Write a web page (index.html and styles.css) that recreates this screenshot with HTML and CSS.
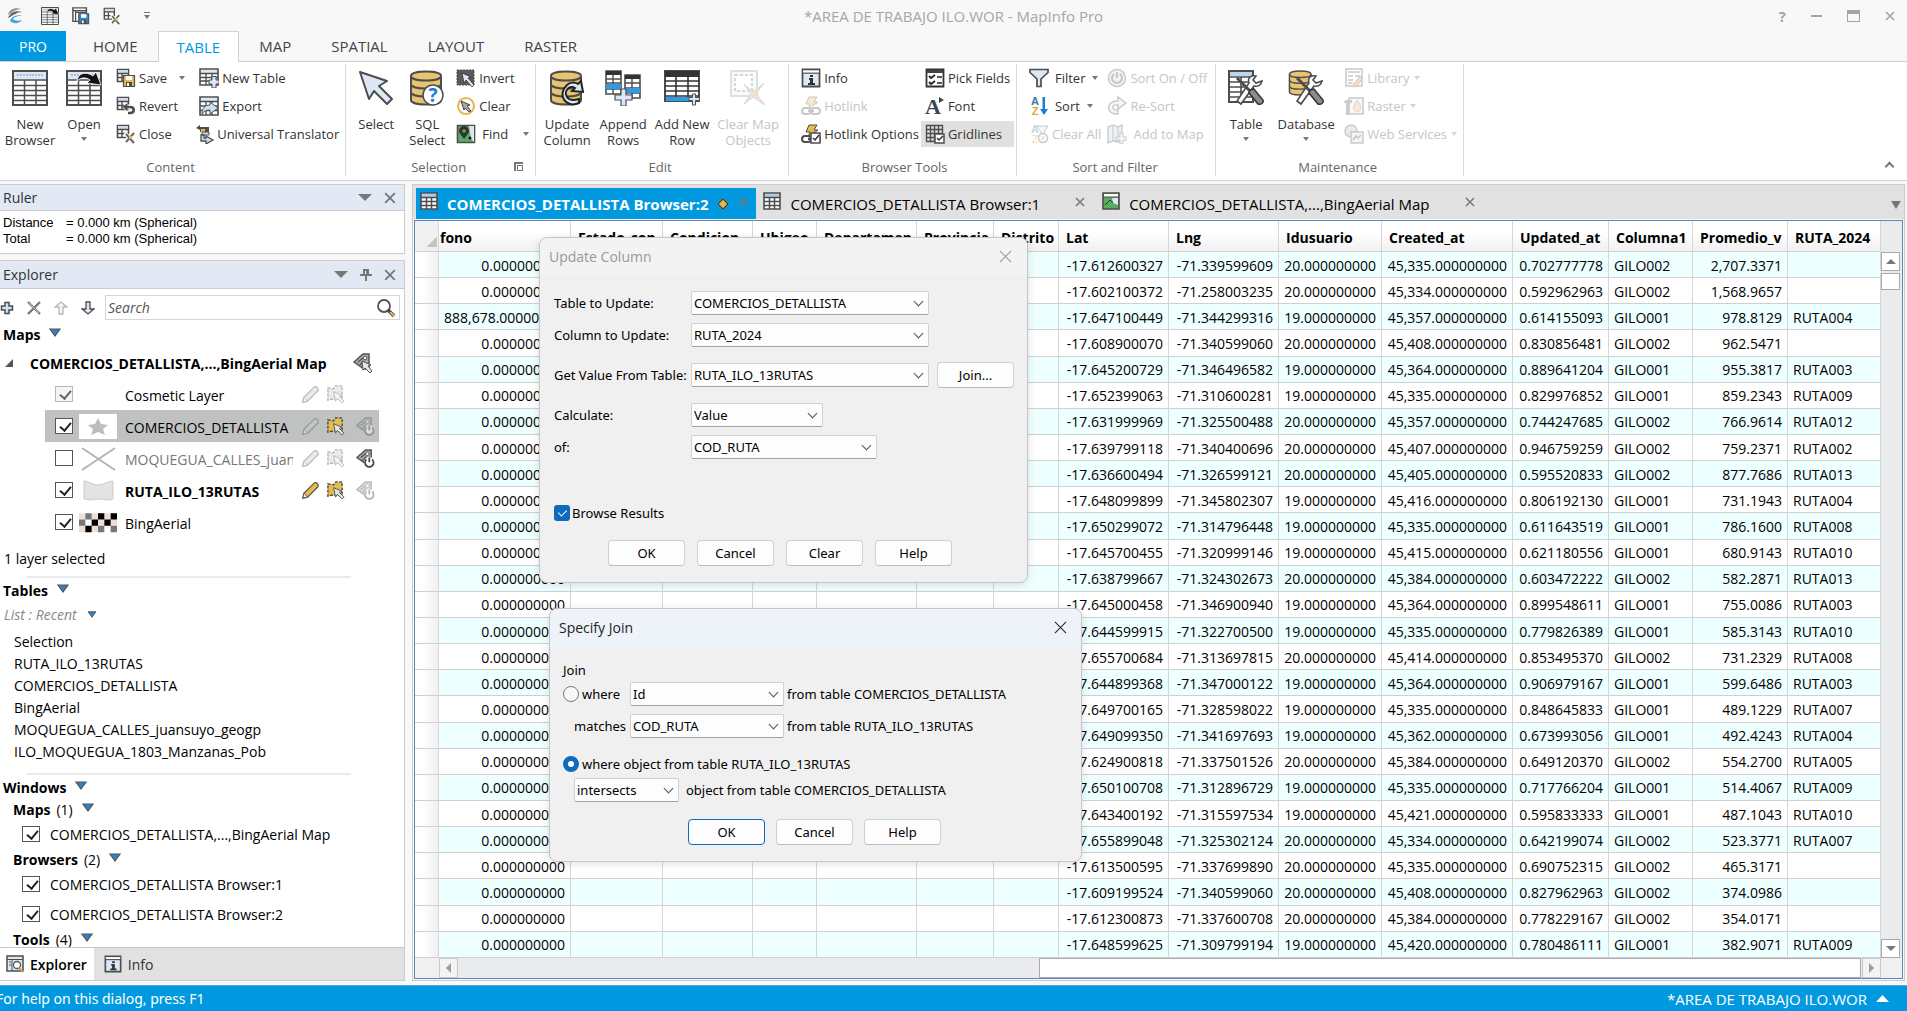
FILE: index.html
```html
<!DOCTYPE html>
<html lang="es">
<head>
    <meta charset="UTF-8">
    <meta name="viewport" content="width=device-width, initial-scale=1.0">
    <title>*AREA DE TRABAJO ILO.WOR - MapInfo Pro</title>
    <link rel="stylesheet" href="styles.css">
</head>
<body>
    <!-- icon sheet -->
    <svg class="sprite" aria-hidden="true">
        <symbol id="i-logo" viewBox="0 0 18 18"><path d="M2 8C3 3 8 0 15 2c-4 0-8 2-13 6z" fill="#8c9296"/><path d="M2 11C4 6 9 3 16 5c-5 0-8 3-14 6z" fill="#5d666c"/><path d="M4 14c1-4 5-6 12-6-4 1-8 2-9 4 2 2 6 2 9 1-3 4-9 4-12 1z" fill="#4a9fe0"/></symbol>
        <symbol id="i-grid" viewBox="0 0 36 36"><path d="M1 1h34v34H1z" fill="#fff" stroke="#4d4d4d" stroke-width="2"/><path d="M2 2h32v7H2z" fill="#dce8f6"/><path d="M5 5h26" stroke="#a9bdd6" stroke-width="2" stroke-dasharray="2 1"/><path d="M1 10h34M1 15.500h34M1 20.500h34M1 25.500h34M1 30.500h34M12.500 10v25M24 10v25" stroke="#4d4d4d" stroke-width="1.500"/></symbol>
        <symbol id="i-open" viewBox="0 0 36 36"><use href="#i-grid"/><path d="M11 11C12 3 20 1 27 6l3-4 5 13-14-2 3-3c-4-3-9-3-13 1z" fill="#111" stroke="#fff" stroke-width=".8"/></symbol>
        <symbol id="i-mini" viewBox="0 0 20 20"><path d="M1.500 1.500h11v12h-11z" fill="#fff" stroke="#4d4d4d" stroke-width="1.600"/><path d="M2 2h10v3H2z" fill="#cfdcec"/><path d="M1 5.500h12M1 9.500h12M6 5v8" stroke="#4d4d4d" stroke-width="1.400"/></symbol>
        <symbol id="i-disk" viewBox="0 0 20 20"><path d="M7.500 7.500h11v11h-11z" stroke="#4d4d4d" stroke-width="1.200"/><path d="M10 8h6v4h-6z" fill="#fff"/><path d="M10 14h6v4h-6z" fill="#4d4d4d"/><path d="M11 15h2v3h-2z" fill="#fff"/></symbol>
        <symbol id="i-save" viewBox="0 0 20 20"><use href="#i-mini"/><use href="#i-disk" fill="#e5bb50"/></symbol>
        <symbol id="i-savews" viewBox="0 0 20 20"><path d="M1 1h15v15H1z" fill="#fff" stroke="#4d4d4d" stroke-width="1.600"/><path d="M1 4h15M4 4v12M4 6h12" stroke="#4d4d4d" stroke-width="1.400"/><use href="#i-disk" fill="#2b88d8"/></symbol>
        <symbol id="i-revert" viewBox="0 0 20 20"><use href="#i-mini"/><path d="M8 11h6c5 0 5 6 0 6h-2" fill="none" stroke="#fff" stroke-width="5"/><path d="M10 11h4c5 0 5 6 0 6h-2" fill="none" stroke="#4d4d4d" stroke-width="2.600"/><path d="M6.500 11l5-4v8z" fill="#4d4d4d"/></symbol>
        <symbol id="i-close" viewBox="0 0 20 20"><use href="#i-mini"/><path d="M9 9l9 10M18 8l-9 10" stroke="#fff" stroke-width="4"/><path d="M10 10l8 9M18 9l-8 9" stroke="#666" stroke-width="2"/><path d="M13 12h3v3h-3z" fill="#e5bb50"/></symbol>
        <symbol id="i-newtable" viewBox="0 0 20 20"><path d="M1 1h18v16H1z" fill="#fff" stroke="#4d4d4d" stroke-width="1.600"/><path d="M2 2h16v3H2z" fill="#dce8f6"/><path d="M1 5.500h18M1 9.500h18M1 13h18M7 5v12M13 5v12" stroke="#4d4d4d" stroke-width="1.300"/><path d="M13 8.500h4v3.500h3v4h-3v4h-4v-4h-3v-4h3z" fill="#dce8f6" stroke="#4d4d4d"/></symbol>
        <symbol id="i-export" viewBox="0 0 20 20"><path d="M1 1h18v18H1z" fill="#fff" stroke="#4d4d4d" stroke-width="1.600"/><path d="M2 2h16v3H2z" fill="#dce8f6"/><path d="M1 5.500h18M1 10h18M1 14.500h18M7 5v14M13 5v14" stroke="#4d4d4d" stroke-width="1.300"/><path d="M3 18c0-6 3-9 8-9V6l8 6-8 6v-4c-4 0-6 1-8 4z" fill="#cfe0f2" stroke="#555"/></symbol>
        <symbol id="i-univ" viewBox="0 0 20 20"><path d="M1 4l4-3v2h9v5H5V6z" fill="#4d4d4d"/><path d="M6 5h4v3H6z" fill="#e5bb50"/><path d="M7 8h7v3H7z" fill="#cfdcec" stroke="#4d4d4d"/><path d="M6 11v6h5v3l7-4-7-4v2H9v-3z" fill="#cfdcec" stroke="#4d4d4d" stroke-width="1.300"/></symbol>
        <symbol id="i-cursor" viewBox="0 0 36 36"><path d="M2 2l27 9-8 5 13 13-5 5-13-13-5 8z" fill="#dce8f6" stroke="#4d4d4d" stroke-width="2" stroke-linejoin="round"/></symbol>
        <symbol id="i-db" viewBox="0 0 36 36"><path d="M2 6c0-6 30-6 30 0v24c0 6-30 6-30 0z" fill="#e8c470" stroke="#4d4d4d" stroke-width="2"/><path d="M2 6c0 6 30 6 30 0M2 14c0 6 30 6 30 0M2 22c0 6 30 6 30 0" fill="none" stroke="#4d4d4d" stroke-width="2"/></symbol>
        <symbol id="i-sql" viewBox="0 0 36 36"><use href="#i-db"/><circle cx="24" cy="25" r="10" fill="#fff" stroke="#4d4d4d" stroke-width="1.500"/><text x="24" y="32" text-anchor="middle" font-family="Open Sans" font-weight="700" font-size="19" fill="#1b7ed2">?</text></symbol>
        <symbol id="i-invert" viewBox="0 0 20 20"><path d="M1 2h17v15H1z" fill="#5a5a5a" stroke="#4d4d4d" stroke-dasharray="2 1"/><path d="M6 5l9 4-3 1 6 7-2 2-6-7-2 3z" fill="#dce8f6" stroke="#333" stroke-width=".8"/></symbol>
        <symbol id="i-clear" viewBox="0 0 20 20"><circle cx="10" cy="10" r="8" fill="#fff" stroke="#e5bb50" stroke-width="2.200"/><path d="M5 5l9 4-3 1 4 5-2 1-4-4-1 2z" fill="#aaa" stroke="#444"/></symbol>
        <symbol id="i-find" viewBox="0 0 20 20"><path d="M1.500 1.500h17v17h-17z" fill="#58ad5f" stroke="#4d4d4d" stroke-width="1.600"/><path d="M13 2h5v16l-3-3z" fill="#dce8f6"/><path d="M8 15C5 11 3 9 3 7a5 5 0 0 1 10 0c0 2-2 4-5 8z" fill="#333"/><circle cx="8" cy="7" r="1.800" fill="#58ad5f"/><circle cx="14" cy="14" r="1.500" fill="#111"/></symbol>
        <symbol id="i-update" viewBox="0 0 36 36"><use href="#i-db"/><path d="M30 33C16 39 8 24 18 15c3-3 8-3 11-1l3-3 2 11-11-1 3-3c-7-4-13 6-6 11 3 2 6 1 10 0z" fill="#dce8f6" stroke="#222" stroke-width="2"/></symbol>
        <symbol id="i-append" viewBox="0 0 36 36"><path d="M1 1h15v23H1zM20 5h15v23H20z" fill="#fff" stroke="#4d4d4d" stroke-width="1.600"/><path d="M1 1h15v4H1zM20 5h15v4H20z" fill="#333"/><path d="M1 9h15M1 13h15M1 19h15M8 5v19M20 13h15M20 18h15M20 23h15M27 9v19" stroke="#4d4d4d" stroke-width="1.400"/><path d="M1 14h15v5H1zM20 18h15v5H20z" fill="#2f9be4"/><path d="M16 19h5v6h6v5h-6v6h-5v-6h-6v-5h6z" fill="#dce8f6" stroke="#4d4d4d" stroke-width="1.200"/></symbol>
        <symbol id="i-addrow" viewBox="0 0 36 36"><path d="M1 1h34v30H1z" fill="#fff" stroke="#4d4d4d" stroke-width="2"/><path d="M1 1h34v6H1z" fill="#333"/><path d="M2 27h32v4H2z" fill="#2f9be4"/><path d="M1 11h34M1 16h34M1 21h34M1 26h34M12 7v20M24 7v20" stroke="#333" stroke-width="1.600"/><path d="M28.500 24h3v3.500h4v3h-4v4.500h-3v-4.500H25v-3h3.500z" fill="#dce8f6" stroke="#4d4d4d"/></symbol>
        <symbol id="i-clearmap" viewBox="0 0 36 36"><path d="M1 1h26v25H1z" fill="#e6f3ef" stroke="#8a9a9a" stroke-width="2"/><path d="M5 5h17v16H5z" fill="#fff" stroke="#777" stroke-width="2" stroke-dasharray="3 2"/><path d="M14 14l9 8L34 13 26 24l9 11-12-8-9 7 7-10z" fill="#f0a070" stroke="#777"/></symbol>
        <symbol id="i-info" viewBox="0 0 20 20"><path d="M1.500 1.500h17v17h-17z" fill="#dce8f6" stroke="#4d4d4d" stroke-width="1.800"/><path d="M2 5h16" stroke="#4d4d4d" stroke-width="1.500"/><path d="M2 2.500h16v2H2z" fill="#fff"/><path d="M9 7h3v2H9zM8 10h4v5h2v2H7v-2h2v-3H8z" fill="#333"/></symbol>
        <symbol id="i-hotlink" viewBox="0 0 20 20"><path d="M8 1h8l-3 5h4L7 13l2-5H5z" fill="#e5bb50" stroke="#4d4d4d"/><rect x="1" y="12" width="9" height="6" rx="3" fill="none" stroke="#4d4d4d" stroke-width="2"/><rect x="10" y="12" width="9" height="6" rx="3" fill="none" stroke="#4d4d4d" stroke-width="2"/><path d="M7 15h6" stroke="#4d4d4d" stroke-width="2"/></symbol>
        <symbol id="i-hotopt" viewBox="0 0 20 20"><use href="#i-hotlink"/><path d="M10 9h9v10h-9z" fill="#fff" stroke="#4d4d4d" stroke-width="1.500"/><path d="M12 14l2 2 4-5" fill="none" stroke="#333" stroke-width="1.500"/></symbol>
        <symbol id="i-pick" viewBox="0 0 20 20"><path d="M1.500 1.500h17v17h-17z" fill="#fff" stroke="#333" stroke-width="1.800"/><path d="M2 2h16v3H2z" fill="#444"/><path d="M4 8l2 2 4-3M4 14l2 2 4-3" fill="none" stroke="#222" stroke-width="1.800"/><path d="M12 9h5M12 15h5" stroke="#222" stroke-width="1.500"/></symbol>
        <symbol id="i-font" viewBox="0 0 20 20"><text x="8" y="18" text-anchor="middle" font-family="Liberation Serif" font-weight="700" font-size="22" fill="#3a4650">A</text><path d="M14 1l5 3-5 3z" fill="#3a4650"/></symbol>
        <symbol id="i-lines" viewBox="0 0 20 20"><path d="M1.500 1.500h16v16h-16zM5.500 1v17M9.500 1v17M13.500 1v17M1 5.500h17M1 9.500h17M1 13.500h17" fill="none" stroke="#4d4d4d" stroke-width="1.400"/><path d="M10 10h9v9h-9z" fill="#fff" stroke="#4d4d4d" stroke-width="1.500"/><path d="M12 14l2 2 4-4" fill="none" stroke="#333" stroke-width="1.500"/></symbol>
        <symbol id="i-filter" viewBox="0 0 20 20"><path d="M1 1.500h18v3L12 11v7.500H8V11L1 4.500z" fill="#dce8f6" stroke="#4d4d4d" stroke-width="1.700"/></symbol>
        <symbol id="i-az" viewBox="0 0 20 20"><text x="6" y="9" text-anchor="middle" font-family="Liberation Sans" font-weight="700" font-size="11" fill="#3178ad">A</text><text x="6" y="19" text-anchor="middle" font-family="Liberation Sans" font-weight="700" font-size="11" fill="#e5a920">Z</text></symbol>
        <symbol id="i-sort" viewBox="0 0 20 20"><use href="#i-az"/><path d="M13.500 1h2.500v12h3l-4 6-4-6h2.500z" fill="#1b7ed2"/></symbol>
        <symbol id="i-clearall" viewBox="0 0 20 20"><use href="#i-az"/><path d="M8 2h11l-4 6v4h-3V8z" fill="#dce8f6" stroke="#4d4d4d"/><circle cx="14" cy="14" r="4.500" fill="#fff" stroke="#4d4d4d" stroke-width="1.500"/><path d="M12 12l4 4M16 12l-4 4" stroke="#e07030"/></symbol>
        <symbol id="i-power" viewBox="0 0 20 20"><circle cx="10" cy="10" r="8.500" fill="#ddd" stroke="#4d4d4d" stroke-width="1.500"/><path d="M7 6a5 5 0 1 0 6 0M10 4v6" fill="none" stroke="#4d4d4d" stroke-width="2.200"/></symbol>
        <symbol id="i-resort" viewBox="0 0 20 20"><path d="M11 18C-2 19-1 4 11 5V1l8 6-8 6V9C4 8 4 14 11 14z" fill="#dce8f6" stroke="#4d4d4d" stroke-width="1.400"/></symbol>
        <symbol id="i-addmap" viewBox="0 0 20 20"><path d="M1 3l5-2 5 2 4-2v16l-4 1-5-1-5 2z" fill="#bcd8ee" stroke="#4d4d4d" stroke-width="1.300"/><path d="M6 1v16M11 3v15" stroke="#4d4d4d"/><path d="M13 9h3v4h4v3h-4v4h-3v-4H9v-3h4z" fill="#dce8f6" stroke="#4d4d4d"/></symbol>
        <symbol id="i-tools" viewBox="0 0 36 36"><path d="M34 11c-1 4-4 6-8 5L13 34l-4-3 12-18c-2-6 3-8 7-7l-3 4 3 3z" fill="#fff" stroke="#4d4d4d" stroke-width="1.600"/><path d="M9 8l14 14" stroke="#4d4d4d" stroke-width="3"/><path d="M22 20l4-1 9 11c1 3-2 5-5 4l-9-11z" fill="#8b8b8b" stroke="#333" stroke-width="1.500"/></symbol>
        <symbol id="i-tabletools" viewBox="0 0 36 36"><path d="M1 1h24v31H1z" fill="#fff" stroke="#4d4d4d" stroke-width="2"/><path d="M2 2h22v4H2z" fill="#b9d6f0"/><path d="M1 7h24M1 12h24M1 17h24M1 22h24M1 27h24M13 7v25" stroke="#4d4d4d" stroke-width="1.600"/><use href="#i-tools"/></symbol>
        <symbol id="i-dbtools" viewBox="0 0 36 36"><use href="#i-db" width="26" height="26"/><use href="#i-tools"/></symbol>
        <symbol id="i-library" viewBox="0 0 20 20"><path d="M2 1h16v17H2z" fill="#fff" stroke="#4d4d4d" stroke-width="1.500"/><path d="M4 4h12M4 8h5M11 8h5M4 12h5M4 15h5" stroke="#4d4d4d" stroke-width="1.500"/><path d="M10 16l6-8 3 2-6 8-3 1z" fill="#e09050" stroke="#4d4d4d"/></symbol>
        <symbol id="i-raster" viewBox="0 0 20 20"><path d="M5 2h14v16H5z" fill="#eee" stroke="#4d4d4d" stroke-width="1.500"/><path d="M13 4c5 6 5 11 0 12-5-1-4-6 0-12z" fill="#f0b080" stroke="#a66"/><path d="M1 4h7v3H5v12H2V7H0z" fill="#555"/></symbol>
        <symbol id="i-web" viewBox="0 0 20 20"><circle cx="7" cy="7" r="6" fill="#bbb" stroke="#555" stroke-width="1.500"/><path d="M7 8h12v11H7z" fill="#ddd" stroke="#555" stroke-width="1.500"/><path d="M9 16l3-4 2 2 3-3" fill="none" stroke="#444" stroke-width="1.500"/></symbol>
        <symbol id="i-pencil" viewBox="0 0 20 20"><path d="M2 18l1-5L14 2c2-1 5 1 4 4L7 17z" fill="currentColor" stroke="#555" stroke-width="1.300"/><path d="M2 18l1-5 4 4z" fill="#fff" stroke="#555"/></symbol>
        <symbol id="i-region" viewBox="0 0 20 20"><path d="M2 3l6 1 2-3h7v14H6l-4 1z" fill="currentColor" stroke="#444" stroke-width="1.400" stroke-dasharray="3 1.500"/><path d="M8 7l9 4-3 1 5 5-2 2-5-5-2 3z" fill="#dce8f6" stroke="#555"/></symbol>
        <symbol id="i-tag" viewBox="0 0 20 20"><path d="M1 9l9-8h6v15h-5z" fill="#aaa" stroke="#555" stroke-width="1.500"/><circle cx="12" cy="5" r="1.800" fill="#fff" stroke="#555"/><path d="M5 9l5-4M7 12l4-4" stroke="#555" stroke-width="1.500"/></symbol>
        <symbol id="i-tagsel" viewBox="0 0 20 20"><use href="#i-tag"/><path d="M9 8l9 4-3 1 4 5-2 2-5-5-2 2z" fill="#dce8f6" stroke="#555"/></symbol>
        <symbol id="i-tagpower" viewBox="0 0 20 20"><use href="#i-tag"/><circle cx="14" cy="14" r="5.500" fill="#fff"/><path d="M11 11a4.500 4.500 0 1 0 6 0M14 9v5" fill="none" stroke="#444" stroke-width="1.800"/></symbol>
        <symbol id="i-sheet" viewBox="0 0 18 18"><path d="M1 1h16v16H1z" fill="#fff" stroke="#4d4d4d" stroke-width="1.600"/><path d="M2 2h14v3H2z" fill="#a9cdf0"/><path d="M1 5.500h16M1 9.500h16M1 13.500h16M6.500 5v12M11.500 5v12" stroke="#4d4d4d" stroke-width="1.500"/></symbol>
        <symbol id="i-map" viewBox="0 0 18 18"><path d="M1 1h16v16H1z" fill="#58ad5f" stroke="#4d4d4d" stroke-width="1.600"/><path d="M2 2h14v3H2z" fill="#fff"/><path d="M1 5h16" stroke="#4d4d4d"/><path d="M10 6h6v7l-5-2z" fill="#dce8f6"/><path d="M3 13l5-5 3 3" stroke="#333" fill="none"/></symbol>
        <symbol id="i-plus" viewBox="0 0 14 14"><path d="M5 1.500h4V5h3.500v4H9v3.500H5V9H1.500V5H5z" fill="#cfe0f2" stroke="#4d4d4d" stroke-width="1.500"/></symbol>
        <symbol id="i-x" viewBox="0 0 14 14"><path d="M1 1l12 12M13 1L1 13" stroke="#777" stroke-width="2.400"/><path d="M2 2l10 10" stroke="#cfe0f2" stroke-width=".8"/></symbol>
        <symbol id="i-down" viewBox="0 0 14 14"><path d="M5 1h4v7h4l-6 5-6-5h4z" fill="#dce8f6" stroke="#4d4d4d" stroke-width="1.300"/></symbol>
        <symbol id="i-tri" viewBox="0 0 12 9"><path d="M1 1h10L6 8z" fill="#2f80c8" stroke="#555" stroke-width="1.200"/></symbol>
        <symbol id="i-caret" viewBox="0 0 8 6" preserveAspectRatio="none"><path d="M0 0h8L4 6z" fill="currentColor"/></symbol>
        <symbol id="i-cross" viewBox="0 0 10 10"><path d="M1 1l8 8M9 1L1 9" stroke="currentColor" stroke-width="1.500" fill="none"/></symbol>
        <symbol id="i-thin" viewBox="0 0 14 14"><path d="M1 1l12 12M13 1L1 13" stroke="currentColor" stroke-width="1.100" fill="none"/></symbol>
        <symbol id="i-pin" viewBox="0 0 12 12"><path d="M3 0h6v5h3v2H7v5H5V7H0V5h3z" fill="#777"/><path d="M5 2h1v3H5z" fill="#fff"/></symbol>
        <symbol id="i-search" viewBox="0 0 20 20"><circle cx="8" cy="8" r="6" fill="#fff" stroke="#555" stroke-width="1.800"/><path d="M12 12l6 6" stroke="#444" stroke-width="3.600"/><path d="M14 14l4 4" stroke="#e5bb50" stroke-width="2"/></symbol>
        <symbol id="i-explorer" viewBox="0 0 18 18"><path d="M1 1h16v15H1z" fill="#dce8f6" stroke="#4d4d4d" stroke-width="1.500"/><path d="M1 4.500h16M6 4v12M3 7h2M3 10h2" stroke="#4d4d4d"/><circle cx="11" cy="10" r="3.500" fill="#fff" stroke="#555" stroke-width="1.300"/><path d="M13 13l4 4" stroke="#c9a23c" stroke-width="2"/></symbol>
    </svg>

    <header class="titlebar">
        <div class="quick">
            <svg class="ico logo"><use href="#i-logo"/></svg>
            <button aria-label="Open"><svg class="ico"><use href="#i-open"/></svg></button>
            <button aria-label="Save workspace"><svg class="ico"><use href="#i-savews"/></svg></button>
            <button aria-label="Close table"><svg class="ico"><use href="#i-close"/></svg></button>
            <button class="more" aria-label="Customize"><svg class="caret"><use href="#i-caret"/></svg></button>
        </div>
        <h1>*AREA DE TRABAJO ILO.WOR - MapInfo Pro</h1>
        <div class="winbtns">
            <button>?</button>
            <button aria-label="Minimize"><span class="min"></span></button>
            <button aria-label="Maximize"><span class="max"></span></button>
            <button aria-label="Close"><svg><use href="#i-cross"/></svg></button>
        </div>
    </header>

    <nav class="tabs">
        <button class="pro">PRO</button>
        <button>HOME</button>
        <button class="current">TABLE</button>
        <button>MAP</button>
        <button>SPATIAL</button>
        <button>LAYOUT</button>
        <button>RASTER</button>
    </nav>

    <section class="ribbon">
        <div class="group">
            <div class="tools">
                <button class="big w56"><svg><use href="#i-grid"/></svg><span>New<br>Browser</span></button>
                <button class="big w52"><svg><use href="#i-open"/></svg><span>Open</span><svg class="caret"><use href="#i-caret"/></svg></button>
                <div class="stack">
                    <button><svg class="ico"><use href="#i-save"/></svg>Save<svg class="caret far"><use href="#i-caret"/></svg></button>
                    <button><svg class="ico"><use href="#i-revert"/></svg>Revert</button>
                    <button><svg class="ico"><use href="#i-close"/></svg>Close</button>
                </div>
                <div class="stack apart">
                    <button><svg class="ico"><use href="#i-newtable"/></svg>New Table</button>
                    <button><svg class="ico"><use href="#i-export"/></svg>Export</button>
                    <button class="tight"><svg class="ico"><use href="#i-univ"/></svg>Universal Translator</button>
                </div>
            </div>
            <h2>Content</h2>
        </div>
        <div class="group">
            <div class="tools">
                <button class="big w56"><svg><use href="#i-cursor"/></svg><span>Select</span></button>
                <button class="big w46"><svg><use href="#i-sql"/></svg><span>SQL<br>Select</span></button>
                <div class="stack">
                    <button><svg class="ico"><use href="#i-invert"/></svg>Invert</button>
                    <button><svg class="ico"><use href="#i-clear"/></svg>Clear</button>
                    <button class="loose"><svg class="ico"><use href="#i-find"/></svg>Find<svg class="caret far"><use href="#i-caret"/></svg></button>
                </div>
            </div>
            <h2>Selection</h2>
            <button class="launcher" aria-label="Selection options"></button>
        </div>
        <div class="group">
            <div class="tools">
                <button class="big w58"><svg><use href="#i-update"/></svg><span>Update<br>Column</span></button>
                <button class="big w54"><svg><use href="#i-append"/></svg><span>Append<br>Rows</span></button>
                <button class="big w64"><svg><use href="#i-addrow"/></svg><span>Add New<br>Row</span></button>
                <button class="big w68" disabled><svg><use href="#i-clearmap"/></svg><span>Clear Map<br>Objects</span></button>
            </div>
            <h2>Edit</h2>
        </div>
        <div class="group pad">
            <div class="tools">
                <div class="stack">
                    <button><svg class="ico"><use href="#i-info"/></svg>Info</button>
                    <button disabled><svg class="ico"><use href="#i-hotlink"/></svg>Hotlink</button>
                    <button><svg class="ico"><use href="#i-hotopt"/></svg>Hotlink Options</button>
                </div>
                <div class="stack">
                    <button><svg class="ico"><use href="#i-pick"/></svg>Pick Fields</button>
                    <button><svg class="ico"><use href="#i-font"/></svg>Font</button>
                    <button class="pressed"><svg class="ico"><use href="#i-lines"/></svg>Gridlines</button>
                </div>
            </div>
            <h2>Browser Tools</h2>
        </div>
        <div class="group pad roomy">
            <div class="tools">
                <div class="stack">
                    <button class="loose"><svg class="ico"><use href="#i-filter"/></svg>Filter<svg class="caret"><use href="#i-caret"/></svg></button>
                    <button class="loose"><svg class="ico"><use href="#i-sort"/></svg>Sort<svg class="caret"><use href="#i-caret"/></svg></button>
                    <button disabled><svg class="ico"><use href="#i-clearall"/></svg>Clear All</button>
                </div>
                <div class="stack">
                    <button disabled><svg class="ico"><use href="#i-power"/></svg>Sort On / Off</button>
                    <button disabled><svg class="ico"><use href="#i-resort"/></svg>Re-Sort</button>
                    <button class="loose" disabled><svg class="ico"><use href="#i-addmap"/></svg>Add to Map</button>
                </div>
            </div>
            <h2>Sort and Filter</h2>
        </div>
        <div class="group">
            <div class="tools">
                <button class="big w56"><svg><use href="#i-tabletools"/></svg><span>Table</span><svg class="caret"><use href="#i-caret"/></svg></button>
                <button class="big w64"><svg><use href="#i-dbtools"/></svg><span>Database</span><svg class="caret"><use href="#i-caret"/></svg></button>
                <div class="stack">
                    <button disabled><svg class="ico"><use href="#i-library"/></svg>Library<svg class="caret"><use href="#i-caret"/></svg></button>
                    <button disabled><svg class="ico"><use href="#i-raster"/></svg>Raster<svg class="caret"><use href="#i-caret"/></svg></button>
                    <button disabled><svg class="ico"><use href="#i-web"/></svg>Web Services<svg class="caret"><use href="#i-caret"/></svg></button>
                </div>
            </div>
            <h2>Maintenance</h2>
        </div>
        <button class="collapse" aria-label="Collapse ribbon"></button>
    </section>

    <main class="workspace">
        <aside class="side">
            <section class="pane">
                <header class="pane-head"><h3>Ruler</h3><svg class="drop"><use href="#i-caret"/></svg><svg class="x"><use href="#i-cross"/></svg></header>
                <dl class="ruler">
                    <dt>Distance</dt><dd>= 0.000 km (Spherical)</dd>
                    <dt>Total</dt><dd>= 0.000 km (Spherical)</dd>
                </dl>
            </section>
            <section class="pane explorer">
                <header class="pane-head"><h3>Explorer</h3><svg class="drop"><use href="#i-caret"/></svg><svg class="pin"><use href="#i-pin"/></svg><svg class="x"><use href="#i-cross"/></svg></header>
                <div class="exp-body">
                    <div class="exp-tools">
                        <button aria-label="Add"><svg><use href="#i-plus"/></svg></button>
                        <button aria-label="Remove"><svg><use href="#i-x"/></svg></button>
                        <button aria-label="Move up" class="up"><svg><use href="#i-down"/></svg></button>
                        <button aria-label="Move down"><svg><use href="#i-down"/></svg></button>
                        <label class="search"><input type="text" placeholder="Search" aria-label="Search"><svg><use href="#i-search"/></svg></label>
                    </div>
                    <h4>Maps <svg class="tri"><use href="#i-tri"/></svg></h4>
                    <div class="map-row"><span class="twisty"></span><b>COMERCIOS_DETALLISTA,...,BingAerial Map</b><svg class="ico"><use href="#i-tagsel"/></svg></div>
                    <ul class="layers">
                        <li>
                            <input type="checkbox" id="l1" checked disabled><span class="swatch"></span><label for="l1">Cosmetic Layer</label>
                            <svg class="ico off pale"><use href="#i-pencil"/></svg><svg class="ico off pale"><use href="#i-region"/></svg>
                        </li>
                        <li class="selected">
                            <input type="checkbox" id="l2" checked><span class="swatch white"><svg viewBox="0 0 38 25"><path d="M19 4l3 6 7 1-5 4 2 6-7-3-7 3 2-6-5-4 7-1z" fill="#bdbdbd"/></svg></span><label for="l2">COMERCIOS_DETALLISTA</label>
                            <svg class="ico off pale"><use href="#i-pencil"/></svg><svg class="ico gold"><use href="#i-region"/></svg><svg class="ico off"><use href="#i-tagpower"/></svg>
                        </li>
                        <li class="dim">
                            <input type="checkbox" id="l3"><span class="swatch"><svg viewBox="0 0 38 25"><path d="M3 2l33 22M36 2L3 24" stroke="#b4b4b4" stroke-width="2"/></svg></span><label for="l3">MOQUEGUA_CALLES_juansuyo_geogp</label>
                            <svg class="ico off pale"><use href="#i-pencil"/></svg><svg class="ico off pale"><use href="#i-region"/></svg><svg class="ico"><use href="#i-tagpower"/></svg>
                        </li>
                        <li class="strong">
                            <input type="checkbox" id="l4" checked><span class="swatch"><svg viewBox="0 0 38 25"><path d="M5 3c5 0 8 4 14 4s10-4 15-4v18c-6 2-10 0-14 0s-9 2-15 0z" fill="#e3e3e3" stroke="#ccc"/></svg></span><label for="l4">RUTA_ILO_13RUTAS</label>
                            <svg class="ico gold"><use href="#i-pencil"/></svg><svg class="ico gold"><use href="#i-region"/></svg><svg class="ico off"><use href="#i-tagpower"/></svg>
                        </li>
                        <li>
                            <input type="checkbox" id="l5" checked><span class="swatch"><svg viewBox="0 0 36 24"><path d="M0 3h6v6H0zM12 3h6v6h-6zM24 3h6v6h-6zM18 9h6v6h-6zM0 15h6v6H0zM12 15h6v6h-6zM30 9h6v6h-6z" fill="#f0dfd4"/><path d="M6 3h6v6H6zM0 9h6v6H0zM18 15h6v6h-6zM30 15h6v6h-6z" fill="#777"/><path d="M18 3h6v6h-6zM30 3h6v6h-6zM12 9h6v6h-6zM24 9h6v6h-6zM6 15h6v6H6z" fill="#000"/></svg></span><label for="l5">BingAerial</label>
                        </li>
                    </ul>
                    <p class="count">1 layer selected</p>
                    <hr>
                    <h4>Tables <svg class="tri"><use href="#i-tri"/></svg></h4>
                    <p class="recent">List : Recent <svg class="tri"><use href="#i-tri"/></svg></p>
                    <ul class="tables">
                        <li>Selection</li>
                        <li>RUTA_ILO_13RUTAS</li>
                        <li>COMERCIOS_DETALLISTA</li>
                        <li>BingAerial</li>
                        <li>MOQUEGUA_CALLES_juansuyo_geogp</li>
                        <li>ILO_MOQUEGUA_1803_Manzanas_Pob</li>
                    </ul>
                    <hr>
                    <h4>Windows <svg class="tri"><use href="#i-tri"/></svg></h4>
                    <h5>Maps <i>(1)</i> <svg class="tri"><use href="#i-tri"/></svg></h5>
                    <div class="win"><input type="checkbox" id="w1" checked><label for="w1">COMERCIOS_DETALLISTA,...,BingAerial Map</label></div>
                    <h5>Browsers <i>(2)</i> <svg class="tri"><use href="#i-tri"/></svg></h5>
                    <div class="win"><input type="checkbox" id="w2" checked><label for="w2">COMERCIOS_DETALLISTA Browser:1</label></div>
                    <div class="win"><input type="checkbox" id="w3" checked><label for="w3">COMERCIOS_DETALLISTA Browser:2</label></div>
                    <h5>Tools <i>(4)</i> <svg class="tri"><use href="#i-tri"/></svg></h5>
                </div>
                <div class="side-tabs">
                    <button class="active"><svg><use href="#i-explorer"/></svg>Explorer</button>
                    <button><svg><use href="#i-info"/></svg>Info</button>
                </div>
            </section>
        </aside>

        <section class="docs">
            <div class="doc-tabs">
                <div class="doc active"><svg class="doc-ico"><use href="#i-sheet"/></svg><span>COMERCIOS_DETALLISTA Browser:2</span><i class="diamond"></i><svg class="x"><use href="#i-cross"/></svg></div>
                <div class="doc"><svg class="doc-ico"><use href="#i-sheet"/></svg><span>COMERCIOS_DETALLISTA Browser:1</span><svg class="x"><use href="#i-cross"/></svg></div>
                <div class="doc"><svg class="doc-ico"><use href="#i-map"/></svg><span>COMERCIOS_DETALLISTA,...,BingAerial Map</span><svg class="x"><use href="#i-cross"/></svg></div>
                <svg class="drop"><use href="#i-caret"/></svg>
            </div>
            <div class="browser">
                <div class="sheet">
                    <table>
                        <colgroup>
                            <col class="c24"><col class="c132"><col class="c92"><col class="c90"><col class="c64"><col class="c100"><col class="c77"><col class="c65"><col class="c110"><col class="c110"><col class="c103"><col class="c131"><col class="c96"><col class="c84"><col class="c95"><col>
                        </colgroup>
                        <thead>
                            <tr><th class="corner"></th><th class="cut">fono</th><th>Estado_con</th><th>Condicion</th><th>Ubigeo</th><th>Departamen</th><th>Provincia</th><th>Distrito</th><th>Lat</th><th>Lng</th><th>Idusuario</th><th>Created_at</th><th>Updated_at</th><th>Columna1</th><th>Promedio_v</th><th>RUTA_2024</th></tr>
                        </thead>
                        <tbody id="rows"></tbody>
                    </table>
                </div>
                <div class="vscroll"><button class="arrow-up" aria-label="Scroll up"></button><span class="thumb"></span><button class="arrow-down" aria-label="Scroll down"></button></div>
                <div class="hscroll"><button class="arrow-left" aria-label="Scroll left"></button><span class="thumb"></span><button class="arrow-right" aria-label="Scroll right"></button></div>
            </div>
        </section>
    </main>

    <footer class="status"><span>For help on this dialog, press F1</span><span class="ws">*AREA DE TRABAJO ILO.WOR<svg><use href="#i-caret"/></svg></span></footer>

    <form class="dialog update">
        <header><h3>Update Column</h3><button type="button" aria-label="Close"><svg><use href="#i-thin"/></svg></button></header>
        <div class="fields">
            <label for="tbl">Table to Update:</label>
            <span class="combo w238"><select id="tbl"><option>COMERCIOS_DETALLISTA</option></select></span>
            <label for="col">Column to Update:</label>
            <span class="combo w238"><select id="col"><option>RUTA_2024</option></select></span>
            <label for="src" class="gap">Get Value From Table:</label>
            <div class="line gap"><span class="combo w238"><select id="src"><option>RUTA_ILO_13RUTAS</option></select></span><button type="button">Join...</button></div>
            <label for="calc" class="gap">Calculate:</label>
            <span class="combo w132 gap"><select id="calc"><option>Value</option></select></span>
            <label for="of">of:</label>
            <span class="combo w186"><select id="of"><option>COD_RUTA</option></select></span>
        </div>
        <div class="browse"><input type="checkbox" id="browse" checked><label for="browse">Browse Results</label></div>
        <div class="actions"><button type="button">OK</button><button type="button">Cancel</button><button type="button">Clear</button><button type="button">Help</button></div>
    </form>

    <form class="dialog join">
        <header><h3>Specify Join</h3><button type="button" aria-label="Close"><svg><use href="#i-thin"/></svg></button></header>
        <div class="join-body">
            <p>Join</p>
            <div class="line"><input type="radio" name="j" id="j1"><label for="j1" class="w48">where</label><span class="combo w154"><select aria-label="Column"><option>Id</option></select></span><span class="after">from table COMERCIOS_DETALLISTA</span></div>
            <div class="line"><label for="m" class="matches">matches</label><span class="combo w154"><select id="m"><option>COD_RUTA</option></select></span><span class="after">from table RUTA_ILO_13RUTAS</span></div>
            <div class="line second"><input type="radio" name="j" id="j2" checked><label for="j2">where object from table RUTA_ILO_13RUTAS</label></div>
            <div class="line inset"><span class="combo w105"><select aria-label="Operator"><option>intersects</option></select></span><span class="after wide">object from table COMERCIOS_DETALLISTA</span></div>
        </div>
        <div class="actions"><button type="button" class="default">OK</button><button type="button">Cancel</button><button type="button">Help</button></div>
    </form>

    <script>
        // lat, lng, idusuario, created, updated, columna1, promedio, ruta
        const data = `-17.612600327 -71.339599609 20 45,335 0.702777778 GILO002 2,707.3371
-17.602100372 -71.258003235 20 45,334 0.592962963 GILO002 1,568.9657
-17.647100449 -71.344299316 19 45,357 0.614155093 GILO001 978.8129 RUTA004
-17.608900070 -71.340599060 20 45,408 0.830856481 GILO002 962.5471
-17.645200729 -71.346496582 19 45,364 0.889641204 GILO001 955.3817 RUTA003
-17.652399063 -71.310600281 19 45,335 0.829976852 GILO001 859.2343 RUTA009
-17.631999969 -71.325500488 20 45,357 0.744247685 GILO002 766.9614 RUTA012
-17.639799118 -71.340400696 20 45,407 0.946759259 GILO002 759.2371 RUTA002
-17.636600494 -71.326599121 20 45,405 0.595520833 GILO002 877.7686 RUTA013
-17.648099899 -71.345802307 19 45,416 0.806192130 GILO001 731.1943 RUTA004
-17.650299072 -71.314796448 19 45,335 0.611643519 GILO001 786.1600 RUTA008
-17.645700455 -71.320999146 19 45,415 0.621180556 GILO001 680.9143 RUTA010
-17.638799667 -71.324302673 20 45,384 0.603472222 GILO002 582.2871 RUTA013
-17.645000458 -71.346900940 19 45,364 0.899548611 GILO001 755.0086 RUTA003
-17.644599915 -71.322700500 19 45,335 0.779826389 GILO001 585.3143 RUTA010
-17.655700684 -71.313697815 20 45,414 0.853495370 GILO002 731.2329 RUTA008
-17.644899368 -71.347000122 19 45,364 0.906979167 GILO001 599.6486 RUTA003
-17.649700165 -71.328598022 19 45,335 0.848645833 GILO001 489.1229 RUTA007
-17.649099350 -71.341697693 19 45,362 0.673993056 GILO001 492.4243 RUTA004
-17.624900818 -71.337501526 20 45,384 0.649120370 GILO002 554.2700 RUTA005
-17.650100708 -71.312896729 19 45,335 0.717766204 GILO001 514.4067 RUTA009
-17.643400192 -71.315597534 19 45,421 0.595833333 GILO001 487.1043 RUTA010
-17.655899048 -71.325302124 20 45,334 0.642199074 GILO002 523.3771 RUTA007
-17.613500595 -71.337699890 20 45,335 0.690752315 GILO002 465.3171
-17.609199524 -71.340599060 20 45,408 0.827962963 GILO002 374.0986
-17.612300873 -71.337600708 20 45,384 0.778229167 GILO002 354.0171
-17.648599625 -71.309799194 19 45,420 0.780486111 GILO001 382.9071 RUTA009`;

        document.getElementById('rows').innerHTML = data.split('\n').map((line, i) => {
            const [lat, lng, user, created, updated, col1, prom, ruta = ''] = line.split(' ');
            const phone = i === 2 ? '888,678.000000000' : '0.000000000';
            const cells = [phone, '', '', '', '', '', '', lat, lng, user + '.000000000', created + '.000000000', updated];
            return '<tr><th></th>' + cells.map(c => `<td class="num">${c}</td>`).join('')
                + `<td>${col1}</td><td class="num">${prom}</td><td>${ruta}</td></tr>`;
        }).join('');
    </script>
</body>
</html>
```
FILE: styles.css
```css
* {
    box-sizing: border-box;
}
body {
    margin: 0;
    height: 100vh;
    display: flex;
    flex-direction: column;
    overflow: hidden;
    position: relative;
    background: #f8f8f8;
    color: #000;
    font-family: "Open Sans", "Segoe UI", sans-serif;
    font-size: 14px;
}
h1, h2, h3, h4, h5, p, ul, dl, dd {
    margin: 0;
    padding: 0;
    font-weight: 400;
    list-style: none;
}
button {
    border: none;
    background: none;
    padding: 0;
    font: inherit;
    color: inherit;
}
svg {
    display: block;
    flex: none;
}
.sprite {
    display: none;
}
.ico {
    width: 20px;
    height: 20px;
}
.caret {
    width: 6px;
    height: 4px;
    color: #777;
}

/* title bar */
.titlebar {
    display: grid;
    grid-template-columns: 1fr auto 1fr;
    align-items: center;
    height: 31px;
    flex: none;
}
.quick {
    display: flex;
    align-items: center;
    gap: 11px;
    padding-left: 6px;
    height: 26px;
}
.quick .ico {
    width: 18px;
    height: 18px;
}
.quick button {
    width: 20px;
}
.quick .logo {
    margin-right: 6px;
}
.quick .more {
    width: 6px;
    margin-left: 10px;
    padding-top: 2px;
    border-top: 1px solid #777;
}
.titlebar h1 {
    font-size: 15px;
    line-height: 20px;
    color: #a6a6a6;
}
.winbtns {
    display: flex;
    justify-content: flex-end;
    align-items: center;
    gap: 25px;
    padding-right: 12px;
    font-weight: 700;
    font-size: 15px;
    color: #a0a5a5;
}
.winbtns svg {
    width: 10px;
    height: 10px;
}
.winbtns .min {
    display: block;
    width: 11px;
    height: 2px;
    background: #a0a5a5;
}
.winbtns .max {
    display: block;
    width: 13px;
    height: 12px;
    border: 1px solid #a0a5a5;
    border-top-width: 4px;
}

/* ribbon tabs */
.tabs {
    display: flex;
    height: 31px;
    flex: none;
    border-bottom: 1px solid #d2d2d2;
}
.tabs button {
    padding: 0 20px;
    height: 30px;
    font-size: 15px;
    color: #444;
}
.tabs button.pro {
    width: 66px;
    margin-right: 7px;
    padding: 0;
    background: #0099e0;
    color: #fff;
    font-size: 14px;
}
.tabs button.current {
    height: 31px;
    padding: 0 18px;
    background: #fff;
    color: #0099e0;
    border: 1px solid #d2d2d2;
    border-bottom: none;
}

/* ribbon */
.ribbon {
    display: flex;
    position: relative;
    height: 119px;
    flex: none;
    background: #fff;
    border-bottom: 1px solid #d2d2d2;
}
.group {
    position: relative;
    display: flex;
    flex-direction: column;
    justify-content: space-between;
    margin: 2px 0 4px;
    padding: 1px 6px 0 2px;
    border-right: 1px solid #dcdcdc;
}
.group.pad {
    padding-left: 6px;
    padding-right: 2px;
}
.group.roomy {
    padding-right: 8px;
}
.group h2 {
    font-size: 13px;
    line-height: 18px;
    text-align: center;
    color: #666;
}
.tools {
    display: flex;
}
.tools button {
    font-size: 13px;
    color: #333;
}
.tools button:disabled {
    color: #c3c6c8;
}
.tools button:disabled svg {
    opacity: .3;
}
.big {
    display: flex;
    flex-direction: column;
    align-items: center;
    padding-top: 5px;
    line-height: 16px;
    white-space: nowrap;
}
.big > svg:first-child {
    width: 36px;
    height: 36px;
    margin-bottom: 10px;
}
.big .caret {
    margin-top: 5px;
}
.w46 { width: 46px; }
.w52 { width: 52px; }
.w54 { width: 54px; }
.w56 { width: 56px; }
.w58 { width: 58px; }
.w64 { width: 64px; }
.w68 { width: 68px; }
.stack {
    display: flex;
    flex-direction: column;
    align-items: flex-start;
    gap: 2px;
    padding-left: 2px;
}
.stack.apart {
    margin-left: 8px;
}
.stack button {
    display: flex;
    align-items: center;
    gap: 3px;
    height: 26px;
    padding: 0 0 0 4px;
    white-space: nowrap;
}
.stack .caret {
    margin-left: 1px;
}
.stack .far {
    margin-left: 9px;
}
.stack .tight {
    padding-left: 0;
    gap: 2px;
}
.stack .loose {
    gap: 6px;
}
.stack .pressed {
    background: #e0e0e0;
    padding-right: 12px;
}
.launcher {
    position: absolute;
    right: 12px;
    bottom: 5px;
    width: 9px;
    height: 9px;
    border-top: 2px solid #777;
    border-left: 2px solid #777;
}
.launcher::after {
    content: "";
    position: absolute;
    right: 0;
    bottom: 0;
    width: 4px;
    height: 4px;
    border: 1px solid #777;
}
.collapse {
    position: absolute;
    right: 14px;
    bottom: 10px;
    width: 7px;
    height: 7px;
    border-top: 2px solid #777;
    border-left: 2px solid #777;
    transform: rotate(45deg);
}

/* workspace */
.workspace {
    flex: 1;
    min-height: 0;
    display: flex;
    gap: 7px;
    padding: 3px 2px 4px 0;
}
.side {
    width: 405px;
    flex: none;
    display: flex;
    flex-direction: column;
    gap: 6px;
}
.pane {
    border: 1px solid #ccc;
    border-left: none;
    background: #fff;
}
.pane-head {
    display: flex;
    align-items: center;
    height: 26px;
    padding: 0 8px 0 3px;
    background: #e2e9f5;
    border-bottom: 1px solid #ccc;
    color: #777;
}
.pane-head h3 {
    flex: 1;
    font-size: 14px;
    color: #333;
}
.drop {
    width: 14px;
    height: 7px;
    color: #777;
}
.pane-head .x {
    width: 12px;
    height: 12px;
    margin-left: 12px;
}
.pin {
    width: 12px;
    height: 12px;
    margin-left: 12px;
}
.ruler {
    display: grid;
    grid-template-columns: 63px 1fr;
    padding: 4px 3px 6px;
    font: 13px/16px "Liberation Sans", Arial, sans-serif;
}
.explorer {
    flex: 1;
    min-height: 0;
    display: flex;
    flex-direction: column;
}
.explorer .pane-head {
    flex: none;
    height: 28px;
}
.exp-body {
    flex: 1;
    min-height: 0;
    overflow: hidden;
}
.exp-tools {
    display: flex;
    align-items: center;
    gap: 13px;
    padding: 6px 4px 0 0;
}
.exp-tools button svg {
    width: 14px;
    height: 14px;
}
.exp-tools .up svg {
    transform: rotate(180deg);
    opacity: .4;
}
.search {
    flex: 1;
    display: flex;
    align-items: center;
    margin-left: -3px;
    border: 1px solid #d5d5d5;
    height: 25px;
    padding-right: 3px;
}
.search input {
    flex: 1;
    min-width: 0;
    border: none;
    outline: none;
    padding: 0 2px;
    font: italic 14px "Open Sans", sans-serif;
}
.search input::placeholder {
    color: #555;
}
.search svg {
    width: 20px;
    height: 20px;
}
h4, h5 {
    display: flex;
    align-items: center;
    gap: 9px;
    height: 22px;
    padding-left: 3px;
    font-size: 14px;
    font-weight: 700;
}
h5 {
    padding-left: 13px;
}
h5 i {
    font-style: normal;
    font-weight: 400;
    margin: 0 0 0 -3px;
}
.tri {
    width: 12px;
    height: 9px;
    margin-bottom: 4px;
}
.exp-tools + h4 {
    height: 28px;
}
.map-row {
    display: flex;
    align-items: center;
    height: 30px;
    padding-left: 5px;
}
.map-row b {
    width: 304px;
    overflow: hidden;
    white-space: nowrap;
    margin: 0 19px 0 17px;
}
.twisty {
    border-left: 8px solid transparent;
    border-bottom: 8px solid #555;
}
.layers li {
    display: flex;
    align-items: center;
    width: 334px;
    height: 32px;
    margin-left: 45px;
    padding-left: 10px;
}
.layers label {
    width: 168px;
    margin: 3px 8px 0;
    overflow: hidden;
    white-space: nowrap;
}
.layers .ico {
    width: 19px;
    height: 19px;
    margin-right: 6px;
}
.layers .ico + .ico + .ico {
    margin: 0 0 0 5px;
}
.layers .selected {
    background: #c0c2c2;
}
.layers .dim label {
    color: #777;
}
.layers .strong label {
    font-weight: 700;
}
.swatch {
    width: 38px;
    height: 25px;
    margin-left: 6px;
}
.swatch.white {
    background: #fff;
}
.off { opacity: .4; }
.pale { color: #ccc; }
.gold { color: #e5bb50; }
.exp-body input[type=checkbox] {
    appearance: none;
    flex: none;
    width: 18px;
    height: 16px;
    margin: 0;
    border: 1px solid #555;
    background: #fff;
}
.exp-body input:checked::before {
    content: "";
    display: block;
    width: 5px;
    height: 9px;
    margin: 1px 0 0 6px;
    border-right: 2px solid #222;
    border-bottom: 2px solid #222;
    transform: rotate(40deg);
}
.exp-body input[type=checkbox]:disabled {
    background: #eef0f0;
    border-color: #999;
    opacity: .7;
}
.count {
    padding: 11px 0 8px 4px;
    line-height: 19px;
}
hr {
    width: 324px;
    margin: 0 0 1px 27px;
    border: none;
    border-top: 2px solid #eaeaea;
}
.recent {
    display: flex;
    align-items: center;
    gap: 9px;
    padding-left: 4px;
    height: 27px;
    font-style: italic;
    color: #888;
}
.recent .tri {
    margin: 0;
    height: 7px;
}
.tables {
    padding: 3px 0 10px 14px;
    line-height: 22px;
}
.win {
    display: flex;
    align-items: center;
    gap: 10px;
    height: 28px;
    padding-left: 22px;
}
.win + .win {
    margin-top: 2px;
}
.side-tabs {
    display: flex;
    flex: none;
    height: 33px;
    background: #e1e1e1;
    border-top: 1px solid #c8c8c8;
}
.side-tabs button {
    display: flex;
    align-items: center;
    gap: 6px;
    padding: 0 7px 0 6px;
    color: #333;
}
.side-tabs button + button {
    padding-left: 10px;
}
.side-tabs .active {
    background: #fff;
    color: #000;
    font-weight: 600;
}
.side-tabs svg {
    width: 18px;
    height: 18px;
}

/* documents */
.docs {
    flex: 1;
    min-width: 0;
    display: flex;
    flex-direction: column;
    border: 1px solid #ccc;
    border-top: none;
    padding: 0 1px 1px;
}
.doc-tabs {
    display: flex;
    align-items: stretch;
    height: 35px;
    flex: none;
    padding: 3px 3px 0 0;
    background: #e1e1e1;
    border-top: 1px solid #ccc;
    margin: 0 -1px;
}
.doc {
    display: flex;
    align-items: center;
    gap: 9px;
    padding: 0 10px 0 7px;
    font-size: 15px;
    white-space: nowrap;
}
.doc .x {
    width: 10px;
    height: 10px;
    margin: 0 0 4px 26px;
    color: #777;
}
.doc.active {
    background: #0099e0;
    color: #fff;
    font-weight: 700;
    margin-left: 3px;
    padding: 0 8px 0 4px;
}
.doc.active .x {
    margin-left: 0;
}
.doc-ico {
    width: 18px;
    height: 18px;
    margin-bottom: 5px;
}
.diamond {
    width: 8px;
    height: 8px;
    background: #e8b84c;
    border: 1px solid #333;
    transform: rotate(45deg);
    margin: 0 2px;
}
.doc-tabs .drop {
    width: 10px;
    height: 8px;
    margin: 13px 0 0 auto;
}
.browser {
    flex: 1;
    min-height: 0;
    display: grid;
    grid-template-columns: 1fr 21px;
    grid-template-rows: 1fr 20px;
    margin-top: 1px;
    border: 1px solid #5b88b8;
    background: #f0f0f0;
}
.sheet {
    overflow: hidden;
    min-width: 0;
    min-height: 0;
}
table {
    width: 100%;
    height: 100%;
    table-layout: fixed;
    border-collapse: separate;
    border-spacing: 0;
    background: #fff;
}
.c24 { width: 24px; }
.c64 { width: 64px; }
.c65 { width: 65px; }
.c77 { width: 77px; }
.c84 { width: 84px; }
.c90 { width: 90px; }
.c92 { width: 92px; }
.c95 { width: 95px; }
.c96 { width: 96px; }
.c100 { width: 100px; }
.c103 { width: 103px; }
.c110 { width: 110px; }
.c131 { width: 131px; }
.c132 { width: 132px; }
th, td {
    padding: 2px 5px 0;
    overflow: hidden;
    white-space: nowrap;
    line-height: 20px;
    border-right: 1px solid #d6d6d6;
    border-bottom: 1px solid #d0d0d0;
}
thead th {
    height: 31px;
    padding: 3px 0 0 7px;
    text-align: left;
    background: linear-gradient(#fff 40%, #f0f0f0);
}
thead .cut {
    padding-left: 1px;
}
thead .corner {
    background: #f0f0f0 linear-gradient(135deg, #f0f0f0 50%, #c4c4c4 50%) no-repeat 11px 16px / 11px 10px;
}
tbody th {
    background: linear-gradient(90deg, #fff 30%, #f0f0f0);
}
tbody tr:nth-child(odd) td {
    background: #eeffff;
}
.num {
    text-align: right;
}
.vscroll, .hscroll {
    display: flex;
    background: #e9ebec;
}
.vscroll {
    flex-direction: column;
    gap: 2px;
    padding-top: 31px;
}
.hscroll {
    margin-left: 24px;
}
.vscroll .thumb, .hscroll .thumb, .vscroll button {
    background: #fff;
    border: 1px solid #aaa;
}
.vscroll button, .hscroll button {
    display: grid;
    place-items: center;
    width: 19px;
    height: 19px;
    flex: none;
}
.hscroll button {
    height: 20px;
    border: 1px solid #c8c8c8;
    background: #f4f4f4;
}
.vscroll .thumb {
    width: 19px;
    height: 17px;
}
.hscroll .thumb {
    width: 57%;
    margin: 0 1px 0 auto;
}
.vscroll .arrow-down {
    margin-top: auto;
}
.arrow-up::before, .arrow-down::before, .arrow-left::before, .arrow-right::before {
    content: "";
    border: 5px solid transparent;
}
.arrow-up::before {
    border-top: none;
    border-bottom-color: #777;
}
.arrow-down::before {
    border-bottom: none;
    border-top-color: #777;
}
.arrow-left::before {
    border-left: none;
    border-right-color: #999;
}
.arrow-right::before {
    border-right: none;
    border-left-color: #999;
}

/* status bar */
.status {
    display: flex;
    justify-content: space-between;
    align-items: center;
    height: 26px;
    flex: none;
    background: #0099e0;
    border-top: 1px solid #4ea9dc;
    color: #fff;
    font: 14px/20px "Noto Sans", Tahoma, sans-serif;
}
.status > span:first-child {
    margin-left: -4px;
}
.ws {
    display: flex;
    align-items: center;
    gap: 9px;
    padding-right: 18px;
    font: 15px/20px "Open Sans", sans-serif;
}
.ws svg {
    width: 13px;
    height: 7px;
    transform: rotate(180deg);
}

/* dialogs */
.dialog {
    position: absolute;
    background: #f0f0f0;
    border: 1px solid #c6c6c6;
    border-radius: 8px;
    box-shadow: 0 2px 8px rgba(0, 0, 0, .12);
    font: 13px/16px "Noto Sans", Tahoma, sans-serif;
}
.update {
    left: 539px;
    top: 237px;
    width: 489px;
    padding-bottom: 16px;
}
.join {
    left: 549px;
    top: 608px;
    width: 533px;
    padding-bottom: 16px;
}
.dialog header {
    display: flex;
    justify-content: space-between;
    align-items: center;
    height: 37px;
    padding: 0 15px 0 9px;
    border-radius: 8px 8px 0 0;
    background: #f3f3f3;
    color: #999;
}
.join header {
    background: #edf3f8;
    color: #222;
    padding-right: 14px;
}
.dialog h3 {
    font: 14px "Open Sans", sans-serif;
}
.dialog header svg {
    width: 13px;
    height: 13px;
}
.fields {
    display: grid;
    grid-template-columns: 137px 1fr;
    align-items: center;
    row-gap: 8px;
    padding: 16px 12px 0 14px;
}
.fields .gap {
    margin-top: 8px;
}
.line {
    display: flex;
    align-items: center;
    height: 24px;
}
.combo {
    position: relative;
    display: block;
    height: 24px;
}
.combo select {
    appearance: none;
    width: 100%;
    height: 24px;
    padding: 0 2px;
    border: 1px solid #d0d0d0;
    border-bottom-color: #a0a0a0;
    border-radius: 2px;
    background: #fdfdfd;
    font: inherit;
    color: #000;
}
.combo::after {
    content: "";
    position: absolute;
    right: 7px;
    top: 7px;
    width: 6px;
    height: 6px;
    border-right: 1px solid #555;
    border-bottom: 1px solid #555;
    transform: rotate(45deg);
}
.w105 { width: 105px; }
.w132 { width: 132px; }
.w154 { width: 154px; }
.w186 { width: 186px; }
.w238 { width: 238px; }
.fields .line button, .actions button {
    width: 77px;
    height: 26px;
    flex: none;
    border: 1px solid #d0d0d0;
    border-bottom-color: #bcbcbc;
    border-radius: 4px;
    background: #fdfdfd;
}
.fields .line {
    gap: 8px;
}
.browse {
    display: flex;
    align-items: center;
    gap: 2px;
    margin: 46px 0 19px 14px;
}
.browse input {
    appearance: none;
    width: 16px;
    height: 16px;
    margin: 0;
    border-radius: 3px;
    background: #0f6cbd;
}
.browse input::before {
    content: "";
    display: block;
    width: 4px;
    height: 7px;
    margin: 3px 0 0 6px;
    border-right: 1px solid #fff;
    border-bottom: 1px solid #fff;
    transform: rotate(45deg);
}
.actions {
    display: flex;
    gap: 12px;
    padding-left: 68px;
}
.join .actions {
    padding: 0 0 0 138px;
    gap: 11px;
}
.actions button.default {
    border-color: #0f6cbd;
}
.join-body {
    padding: 16px 12px 17px 13px;
}
.join-body .line {
    margin-bottom: 8px;
}
.join-body p {
    margin-bottom: 4px;
}
.join-body .second {
    margin: 14px 0 2px;
}
.join-body .inset {
    padding-left: 11px;
    margin-bottom: 0;
}
.join-body input {
    appearance: none;
    width: 16px;
    height: 16px;
    margin: 0 3px 0 0;
    border: 1px solid #777;
    border-radius: 50%;
    background: #f8f8f8;
}
.join-body input:checked {
    border: 5px solid #0f6cbd;
    background: #fff;
}
.w48 { width: 48px; }
.matches {
    width: 56px;
    margin-left: 11px;
}
.after {
    margin-left: 3px;
}
.after.wide {
    margin-left: 7px;
}
```
